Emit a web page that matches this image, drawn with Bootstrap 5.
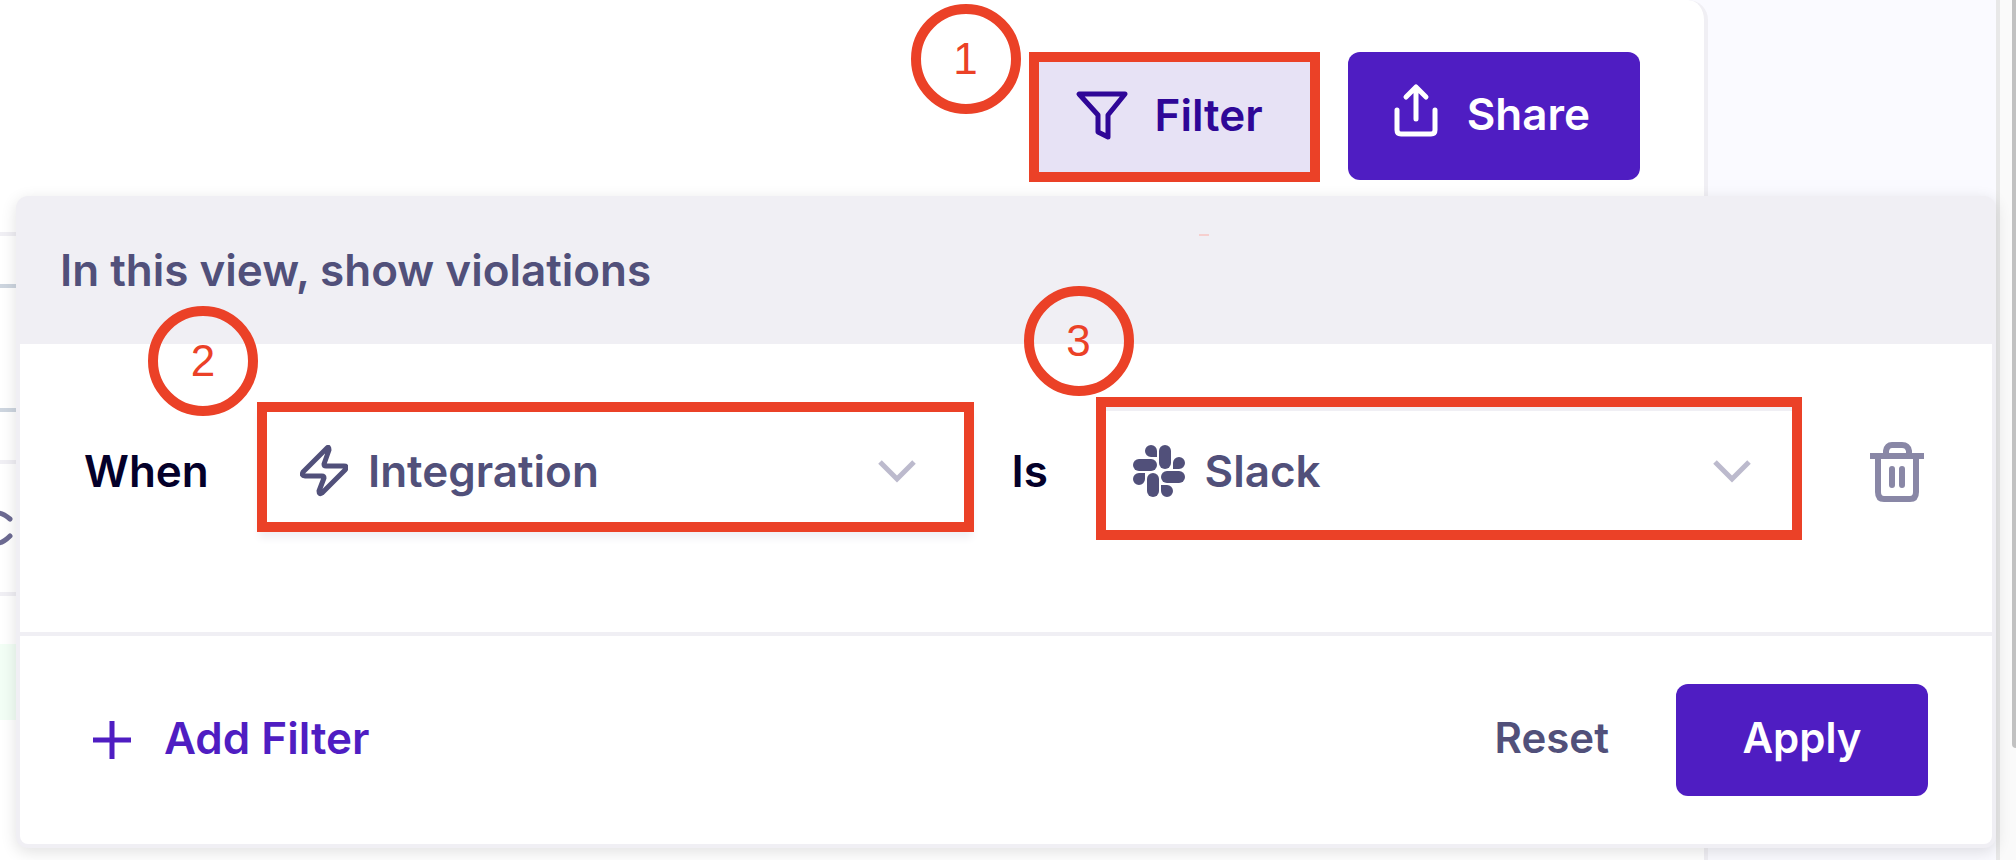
<!DOCTYPE html>
<html lang="en">
<head>
<meta charset="utf-8">
<meta name="viewport" content="width=device-width, initial-scale=1">
<title>Violations filter</title>
<link href="https://cdn.jsdelivr.net/npm/bootstrap@5.3.0/dist/css/bootstrap.min.css" rel="stylesheet">
<script src="https://cdn.jsdelivr.net/npm/bootstrap@5.3.0/dist/js/bootstrap.bundle.min.js" defer></script>
<style>
  :root { --brand: #4f1dc2; --ink: #51507a; --line: #f0eff4; --mark: #eb4127; }
  body { font-family: Inter, "Liberation Sans", sans-serif; font-size: 44px; font-weight: 560; line-height: 56px; color: var(--ink); background: #fafaff; }
  svg { display: block; flex: none; }
  .btn { --bs-btn-font-size: 44px; --bs-btn-font-weight: 560; --bs-btn-line-height: 56px; --bs-btn-border-radius: 12px; --bs-btn-border-width: 0; }
  .btn-brand { --bs-btn-bg: var(--brand); --bs-btn-color: #fff; --bs-btn-hover-bg: #4318a8; --bs-btn-hover-color: #fff; }
  .btn-quiet { --bs-btn-color: var(--ink); --bs-btn-hover-color: var(--brand); }

  /* page behind the menu */
  .page-card { margin-right: 288px; border-right: 4px solid var(--line); border-top-right-radius: 20px; }
  .toolbar { padding: 52px 64px 50px 0; gap: 28px; }
  .toolbar .btn { height: 128px; }
  .btn-filter { --bs-btn-bg: #e7e2f5; --bs-btn-color: #2f0797; --bs-btn-hover-bg: #ddd6f1; --bs-btn-hover-color: #2f0797; --bs-btn-active-bg: #ddd6f1; padding: 0 47px 4px 36px; gap: 26px; }
  .btn-share { padding: 0 50px 4px 44px; gap: 27px; }
  .toolbar .marked { height: 130px; }
  .grid-line { border-top: 4px solid var(--line); height: 52px; }
  .grid-line.strong { border-color: #cdd5df; }
  .grid-line.tall { height: 124px; }
  .grid-line.sortable { height: 132px; padding-top: 46px; }
  .ok-row { background: #f2fef5; height: 76px; }

  /* red call-outs */
  .marked { border: 10px solid var(--mark); border-radius: 0; }
  .step { position: absolute; width: 110px; height: 110px; border: 10px solid var(--mark); border-radius: 50%; color: var(--mark); font: 400 44px/90px "Liberation Sans", Arial, sans-serif; text-align: center; }
  .step-filter { right: 100%; bottom: 100%; margin: 0 8px -62px 0; }
  .step-field { right: 100%; bottom: 100%; margin: 0 9px -4px 0; }
  .step-above { left: -82px; bottom: 100%; margin-bottom: 11px; }

  /* filter menu */
  .filter-menu { position: absolute; top: 196px; left: 16px; right: 0; border: 4px solid var(--line); border-radius: 12px; background: #fff; box-shadow: 0 4px 16px rgba(0, 0, 0, .12); }
  .menu-title { background: var(--line); height: 144px; padding: 0 40px 4px; }
  .blip { position: absolute; top: 34px; left: 1179px; width: 10px; height: 2px; background: #f6cfce; }
  .rule-row { display: grid; grid-template-columns: 173px 71fr 122px 70fr 190px; align-items: center; padding: 53px 0 92px 64px; border-bottom: 4px solid var(--line); }
  .rule-word { color: #04002a; padding-top: 4px; font-weight: 600; }
  .is-word { padding-left: 38px; }
  .pick { position: relative; display: flex; align-items: center; gap: 20px; }
  .pick-a { height: 130px; margin-bottom: 4px; padding: 8px 48px 0 33px; box-shadow: 0 8px 8px -2px #f0eff4; }
  .pick-b { height: 143px; padding: 5px 41px 0 27px; box-shadow: inset 0 4px var(--line); }
  .pick select { appearance: none; border: 0; background: none; color: inherit; font: inherit; flex: 1; min-width: 0; height: 100%; padding: 0; outline: 0; }
  .pick .chev { pointer-events: none; }
  .btn-trash { padding: 6px 0 0; }
  .menu-foot { padding: 48px 64px 48px 72px; }
  .btn-add { --bs-btn-color: var(--brand); --bs-btn-hover-color: #4318a8; gap: 32px; }
  .btn-apply, .btn-reset { --bs-btn-font-size: 42px; height: 112px; }
  .btn-reset { margin-right: 67px; }
  .btn-apply { width: 252px; }

  /* scroll strip */
  .scroll-strip { width: 20px; background: #fafafa; border-left: 4px solid #e8e8e8; }
  .scroll-thumb { width: 4px; height: 87vh; background: #c1c1c1; border-bottom-left-radius: 4px; }
</style>
</head>
<body>
<div class="d-flex min-vh-100 overflow-hidden">
  <main class="flex-fill position-relative">
    <div class="page-card bg-white min-vh-100">
      <div class="toolbar d-flex justify-content-end">
        <div class="position-relative">
          <button type="button" class="btn btn-filter marked d-flex align-items-center">
            <svg width="54" height="50" viewBox="0 0 54 50" fill="none" stroke="currentColor" stroke-width="5" stroke-linejoin="round"><path d="M4 4H50L33 25V47L23 42V25Z"/></svg>
            Filter
          </button>
          <span class="step step-filter">1</span>
        </div>
        <button type="button" class="btn btn-brand btn-share d-flex align-items-center">
          <svg class="mb-2" width="48" height="54" viewBox="0 0 48 54" fill="none" stroke="currentColor" stroke-width="5" stroke-linecap="round" stroke-linejoin="round"><path d="M5 27V47Q5 51 9 51H39Q43 51 43 47V27"/><path d="M24 36V4M14 14L24 4L34 14"/></svg>
          Share
        </button>
      </div>
      <div class="grid-line"></div>
      <div class="grid-line strong tall"></div>
      <div class="grid-line strong"></div>
      <div class="grid-line sortable">
        <svg width="14" height="36" viewBox="0 0 14 36" fill="none" stroke="#6c6a92" stroke-width="5"><path d="M-2 3Q3 3 10 9M10 26Q3 33 -2 33" stroke-linecap="round" stroke-linejoin="round"/></svg>
      </div>
      <div class="grid-line"></div>
      <div class="ok-row"></div>
    </div>

    <section class="filter-menu">
      <div class="menu-title d-flex align-items-center">In this view, show violations</div>
      <span class="blip"></span>
      <div class="rule-row">
        <label class="rule-word" for="field">When</label>
        <div class="pick pick-a marked">
          <svg width="48" height="52" viewBox="0 0 48 52" fill="none" stroke="currentColor" stroke-width="5" stroke-linejoin="round"><path d="M27 3L3 27Q1 31 5 31H22Q24 31 24 33L19 46Q19 50 22 48L45 25Q48 21 44 21H26Q24 21 24 19L29 5Q29 1 27 3Z"/></svg>
          <select id="field"><option>Integration</option></select>
          <svg class="chev" width="38" height="24" viewBox="0 0 38 24" fill="none" stroke="#bcbacd" stroke-width="5"><path d="M2 3L19 20L36 3"/></svg>
          <span class="step step-field">2</span>
        </div>
        <label class="rule-word is-word" for="value">Is</label>
        <div class="pick pick-b marked">
          <svg width="52" height="52" viewBox="0 0 52 52" fill="currentColor"><path d="M24 12H18A6 6 0 1 1 24 6ZM40 24V18A6 6 0 1 1 46 24ZM28 40H34A6 6 0 1 1 28 46ZM12 28V34A6 6 0 1 1 6 28Z"/><rect x="26" width="12" height="24" rx="6"/><rect y="14" width="24" height="12" rx="6"/><rect x="28" y="26" width="24" height="12" rx="6"/><rect x="14" y="28" width="12" height="24" rx="6"/></svg>
          <select id="value"><option>Slack</option></select>
          <svg class="chev" width="38" height="24" viewBox="0 0 38 24" fill="none" stroke="#bcbacd" stroke-width="5"><path d="M2 3L19 20L36 3"/></svg>
          <span class="step step-above">3</span>
        </div>
        <button type="button" class="btn btn-trash d-flex justify-content-center" aria-label="Delete filter">
          <svg width="54" height="60" viewBox="0 0 54 60" fill="none" stroke="#8987a6" stroke-width="6" stroke-linecap="round" stroke-linejoin="round"><path d="M0 14H54" stroke-linecap="butt"/><path d="M16 14V9Q17 3 22 3H32Q38 3 39 9V14M8 15V50Q8 57 14 57H40Q46 57 46 50V15M22 27V43M32 27V43"/></svg>
        </button>
      </div>
      <div class="menu-foot d-flex align-items-center">
        <button type="button" class="btn btn-add p-0 d-flex align-items-center">
          <svg width="40" height="40" viewBox="0 0 40 40" stroke="currentColor" stroke-width="5"><path d="M20 1V39M1 20H39"/></svg>
          <span class="pb-1">Add Filter</span>
        </button>
        <button type="button" class="btn btn-quiet btn-reset p-0 pb-1 ms-auto">Reset</button>
        <button type="button" class="btn btn-brand btn-apply p-0 pb-1">Apply</button>
      </div>
    </section>
  </main>
  <div class="scroll-strip d-flex justify-content-end"><div class="scroll-thumb"></div></div>
</div>
</body>
</html>
